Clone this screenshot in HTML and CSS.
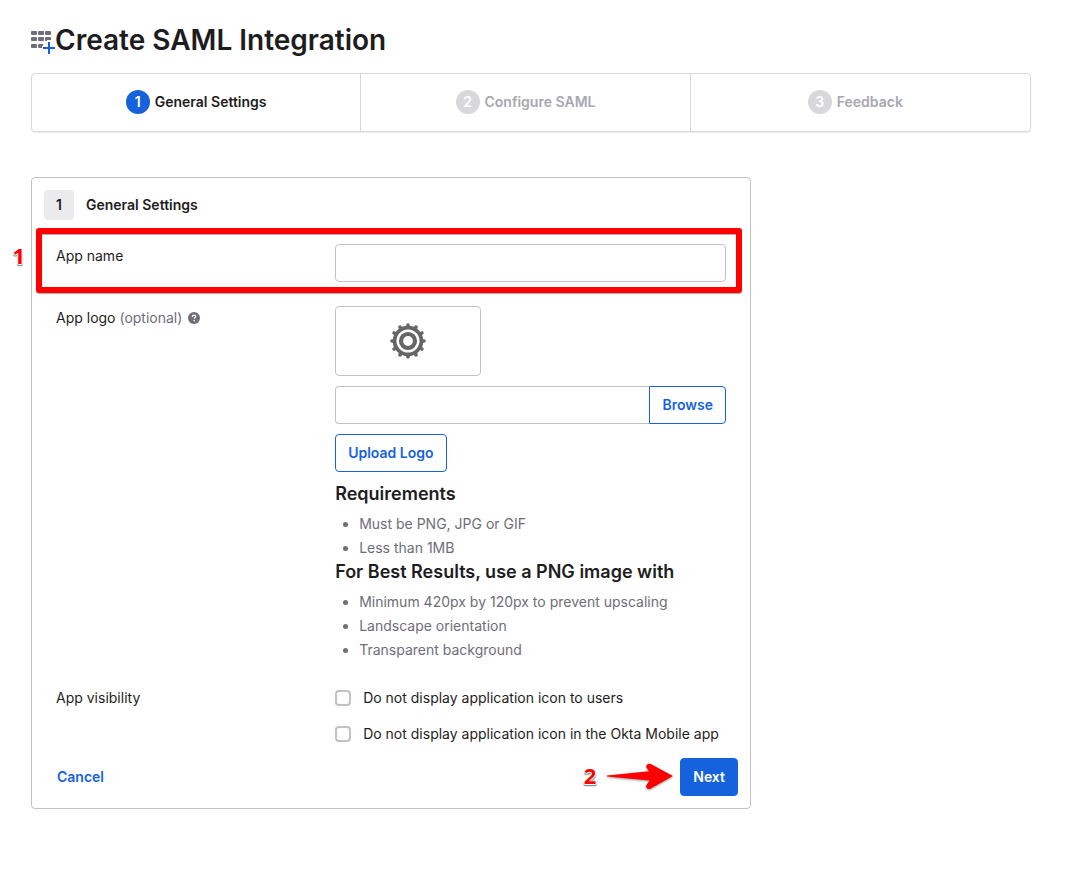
FILE: index.html
```html
<!DOCTYPE html>
<html lang="en">
<head>
<meta charset="utf-8">
<title>Create SAML Integration</title>
<meta name="viewport" content="width=device-width, initial-scale=1">
<link rel="stylesheet" href="styles.css">
</head>
<body>
<main class="page">
  <header class="page-header">
    <svg class="page-icon" viewBox="0 0 24 24" width="24" height="24" aria-hidden="true">
      <g fill="#6e6e78">
        <rect x="0" y="1" width="6" height="4" rx="1"/><rect x="7" y="1" width="6" height="4" rx="1"/><rect x="14" y="1" width="6" height="4" rx="1"/>
        <rect x="0" y="7" width="6" height="4" rx="1"/><rect x="7" y="7" width="6" height="4" rx="1"/><path d="M15 7h4a1 1 0 0 1 1 1v2h-4v1h-1a1 1 0 0 1-1-1V8a1 1 0 0 1 1-1z"/>
        <rect x="0" y="14" width="6" height="4" rx="1"/><path d="M8 14h4v2h-1v2H8a1 1 0 0 1-1-1v-2a1 1 0 0 1 1-1z"/>
      </g>
      <path d="M18 12v12M12 18h12" stroke="#1662dd" stroke-width="2" fill="none"/>
    </svg>
    <h1 class="page-title">Create SAML Integration</h1>
  </header>

  <ol class="steps">
    <li class="step step-current" aria-current="step"><span class="step-number">1</span>General Settings</li>
    <li class="step"><span class="step-number">2</span>Configure SAML</li>
    <li class="step"><span class="step-number">3</span>Feedback</li>
  </ol>

  <form class="panel">
    <div class="panel-header">
      <span class="panel-number">1</span>
      <h2 class="panel-title">General Settings</h2>
    </div>

    <div class="row row-highlighted">
      <label class="row-label" for="app-name">App name</label>
      <input class="text-input" id="app-name" type="text">
      <span class="callout callout-name">1</span>
    </div>

    <div class="row">
      <label class="row-label" for="logo-file">App logo <span class="muted">(optional)</span>
        <svg class="help" viewBox="0 0 12 12" width="12" height="12" role="img" aria-label="Help">
          <circle cx="6" cy="6" r="6" fill="#6e6e78"/>
          <path d="M4.300 4.900c0-1.100.7-1.700 1.700-1.700s1.700.6 1.700 1.400c0 1-1.400 1-1.400 2.100" fill="none" stroke="#fff" stroke-width="1.300"/>
          <circle cx="6.200" cy="8.600" r=".8" fill="#fff"/>
        </svg>
      </label>
      <div class="logo-field">
        <div class="logo-preview">
          <svg viewBox="-18 -18 36 36" width="36" height="36" role="img" aria-label="Default app logo">
            <g fill="none" stroke="#666">
              <circle r="13.400" stroke-width="3.800"/>
              <circle r="7" stroke-width="4.200"/>
              <path stroke-width="3.600" stroke-linecap="round" d="M0-14V-16M0 14V16M-14 0H-16M14 0H16M7-12.100 8-13.900M12.100-7 13.900-8M12.100 7 13.900 8M7 12.100 8 13.900M-7 12.100-8 13.900M-12.100 7-13.900 8M-12.100-7-13.900-8M-7-12.100-8-13.900"/>
            </g>
          </svg>
        </div>
        <div class="file-group">
          <input class="text-input file-input" id="logo-file" type="text">
          <button class="button browse" type="button">Browse</button>
        </div>
        <button class="button" type="button">Upload Logo</button>
        <div class="notes">
          <h3 class="notes-title">Requirements</h3>
          <ul class="notes-list">
            <li>Must be PNG, JPG or GIF</li>
            <li>Less than 1MB</li>
          </ul>
          <h3 class="notes-title">For Best Results, use a PNG image with</h3>
          <ul class="notes-list">
            <li>Minimum 420px by 120px to prevent upscaling</li>
            <li>Landscape orientation</li>
            <li>Transparent background</li>
          </ul>
        </div>
      </div>
    </div>

    <div class="row" role="group" aria-labelledby="visibility">
      <span class="row-label" id="visibility">App visibility</span>
      <div class="checks">
        <label class="check"><input class="check-box" type="checkbox">Do not display application icon to users</label>
        <label class="check"><input class="check-box" type="checkbox">Do not display application icon in the Okta Mobile app</label>
      </div>
    </div>

    <div class="actions">
      <a class="cancel" href="#">Cancel</a>
      <div class="next-group">
        <span class="callout">2</span>
        <svg class="arrow" viewBox="0 0 68 28" width="68" height="28" aria-hidden="true">
          <path d="M2 12.500 44 8.300 41.500 4.500C40.500 2 43-.2 45.800 1L68 13 45.800 25.500C43 27 40 25 41.500 22L44.500 17.500 2 13.500Z" fill="#f00"/>
        </svg>
        <button class="button button-primary" type="submit">Next</button>
      </div>
    </div>
  </form>
</main>
</body>
</html>
```
FILE: styles.css
```css
* {
  box-sizing: border-box;
}

body {
  margin: 0;
  background: #fff;
  color: #1d1d21;
  font: 14px/24px Inter, "Liberation Sans", sans-serif;
}

h1, h2, h3, ul, ol {
  margin: 0;
  padding: 0;
}

.page {
  padding: 23px 54px 62px 31px;
}

.page-header {
  display: flex;
  align-items: center;
}

.page-icon {
  flex: none;
  margin-top: 4px;
}

.page-title {
  font-size: 28px;
  line-height: 34px;
  font-weight: 600;
}

.steps {
  display: flex;
  margin-top: 16px;
  border: 1px solid #d7d7dc;
  border-radius: 4px;
  box-shadow: 0 1px 1px #ececee;
  list-style: none;
}

.step {
  display: flex;
  align-items: center;
  justify-content: center;
  gap: 5px;
  width: 33%;
  padding: 16px 0 17px;
  border-right: 1px solid #d7d7dc;
  color: #a7a7b2;
  font-weight: 600;
}

.step:last-child {
  border-right: 0;
}

.step-current {
  color: #1d1d21;
}

.step-number {
  width: 24px;
  border-radius: 50%;
  background: #d7d7dc;
  color: #fff;
  text-align: center;
}

.step-current .step-number {
  background: #1662dd;
}

.panel {
  max-width: 720px;
  margin-top: 45px;
  padding: 12px 0;
  border: 1px solid #c1c1c8;
  border-radius: 4px;
}

.panel-header {
  display: flex;
  align-items: center;
  gap: 12px;
  padding: 0 12px;
}

.panel-number {
  width: 30px;
  border-radius: 4px;
  background: #ebebed;
  font-weight: 600;
  line-height: 30px;
  text-align: center;
}

.panel-title {
  font-size: 14px;
  font-weight: 600;
}

.row {
  display: grid;
  grid-template-columns: 5fr 7fr;
  margin: 24px 24px 0;
}

.row-highlighted {
  position: relative;
}

.row-highlighted::after {
  content: "";
  position: absolute;
  inset: -16px -16px -11px -20px;
  border: 6px solid #f00;
  border-radius: 3px;
  box-shadow: 0 1px 1px #aaa, inset 0 1px 1px #aaa;
  pointer-events: none;
}

.muted {
  color: #6e6e78;
}

.help {
  margin-left: 2px;
  vertical-align: -1px;
}

.text-input {
  width: 100%;
  height: 38px;
  padding: 0 12px;
  border: 1px solid #c1c1c8;
  border-radius: 4px;
  background: #fff;
  color: inherit;
  font: inherit;
}

.logo-field {
  display: flex;
  flex-direction: column;
  align-items: flex-start;
  gap: 10px;
}

.logo-preview {
  display: grid;
  place-items: center;
  width: 146px;
  height: 70px;
  border: 1px solid #c1c1c8;
  border-radius: 4px;
}

.file-group {
  display: flex;
  width: 100%;
}

.file-input {
  flex: 1;
  min-width: 0;
  border-right: 0;
  border-radius: 4px 0 0 4px;
}

.button {
  height: 38px;
  padding: 0 12px;
  border: 1px solid #1662dd;
  border-radius: 4px;
  background: #fff;
  color: #1662dd;
  font: inherit;
  font-weight: 600;
}

.browse {
  border-radius: 0 4px 4px 0;
}

.button-primary {
  background: #1662dd;
  color: #fff;
}

.notes-title {
  font-size: 18px;
  font-weight: 600;
}

.notes-list {
  margin-top: 6px;
  padding-left: 24px;
  color: #6e6e78;
}

.checks {
  display: grid;
  gap: 12px;
}

.check {
  display: flex;
  align-items: center;
  gap: 12px;
}

.check-box {
  appearance: none;
  flex: none;
  width: 16px;
  height: 16px;
  margin: 0;
  border: 2px solid #c1c1c8;
  border-radius: 4px;
  background: #fff;
}

.check-box:checked {
  border-color: #1662dd;
  background: #1662dd;
}

.actions {
  display: flex;
  align-items: center;
  justify-content: space-between;
  margin-top: 12px;
  padding: 0 12px 0 25px;
}

.cancel {
  color: #1662dd;
  font-weight: 600;
  text-decoration: none;
}

.next-group {
  display: flex;
  align-items: center;
}

.arrow {
  margin: 0 7px 0 9px;
  filter: drop-shadow(0 1px 1px #999);
}

.callout {
  padding-bottom: 4px;
  color: #f00;
  font: 700 22px/24px "Open Sans", sans-serif;
  text-shadow: -1px 0 #fff, 1px 0 #fff, 0 1px #fff, 0 2px 1px #888, -1px 2px 1px #aaa, 1px 2px 1px #aaa;
}

.callout-name {
  position: absolute;
  top: -1px;
  right: calc(100% + 31px);
}
```
